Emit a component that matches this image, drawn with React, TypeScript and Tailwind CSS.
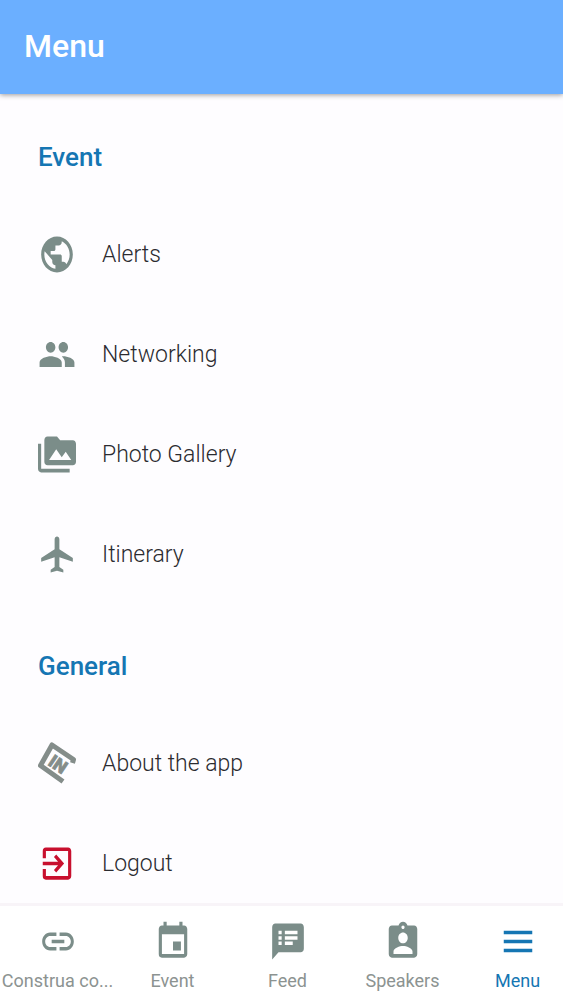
import type { ComponentType, SVGProps } from 'react';
import {
  MdAssignmentInd,
  MdExitToApp,
  MdInsertInvitation,
  MdLink,
  MdLocalAirport,
  MdMenu,
  MdPeople,
  MdPermMedia,
  MdPublic,
  MdSpeakerNotes,
} from 'react-icons/md';

type Icon = ComponentType<SVGProps<SVGSVGElement>>;

interface MenuItem {
  label: string;
  icon: Icon;
  color?: string;
}

// Tilted badge used as the app's own logo
function AppLogo(props: SVGProps<SVGSVGElement>) {
  return (
    <svg viewBox="0 0 38 43" fill="none" {...props}>
      <path
        d="M34.5 21 L35.5 17.5 L14 3 L2.500 23.5 L25 39.5"
        stroke="currentColor"
        strokeWidth="5"
        strokeLinejoin="round"
      />
      <text
        x="9"
        y="22.5"
        transform="rotate(34 9 22.5)"
        fill="currentColor"
        stroke="currentColor"
        strokeWidth="0.7"
        fontFamily="Roboto, sans-serif"
        fontSize="18"
        fontWeight="900"
      >
        IN
      </text>
    </svg>
  );
}

const sections: { title: string; items: MenuItem[] }[] = [
  {
    title: 'Event',
    items: [
      { label: 'Alerts', icon: MdPublic },
      { label: 'Networking', icon: MdPeople },
      { label: 'Photo Gallery', icon: MdPermMedia },
      { label: 'Itinerary', icon: MdLocalAirport },
    ],
  },
  {
    title: 'General',
    items: [
      { label: 'About the app', icon: AppLogo, color: 'text-[#848d8a]' },
      { label: 'Logout', icon: MdExitToApp, color: 'text-[#c8102e]' },
    ],
  },
];

const tabs: MenuItem[] = [
  { label: 'Construa co...', icon: MdLink },
  { label: 'Event', icon: MdInsertInvitation },
  { label: 'Feed', icon: MdSpeakerNotes },
  { label: 'Speakers', icon: MdAssignmentInd },
  { label: 'Menu', icon: MdMenu },
];

function App() {
  return (
    <div className="flex h-screen flex-col bg-[#fefdff] font-['Roboto',sans-serif]">
      {/* Header */}
      <header className="relative flex h-[94px] shrink-0 items-center bg-[#6bafff] px-6 pb-0.5 shadow-[0_1px_5px_rgba(0,0,0,0.4)]">
        <h1 className="text-[32px] leading-9 font-medium text-white">Menu</h1>
      </header>

      {/* Menu sections */}
      <main className="min-h-0 flex-1 overflow-y-auto [scrollbar-width:none]">
        {sections.map((section) => (
          <section key={section.title}>
            <h2 className="flex h-[109px] items-center px-[38px] pt-4 text-[26px] leading-8 font-medium text-[#1576b3]">
              {section.title}
            </h2>
            <ul>
              {section.items.map(({ label, icon: ItemIcon, color }) => (
                <li key={label}>
                  <button type="button" className="flex h-[100px] w-full items-center gap-[26px] px-[38px] pt-0.5 text-left">
                    <ItemIcon
                      preserveAspectRatio="none"
                      className={`h-[43px] w-[38px] shrink-0 ${color ?? 'text-[#7b8d89]'}`}
                    />
                    <span className="pt-0.5 text-[23px] leading-8 font-light text-[#2b2b30]">{label}</span>
                  </button>
                </li>
              ))}
            </ul>
          </section>
        ))}
      </main>

      {/* Bottom tabs */}
      <nav className="flex h-[97px] shrink-0 overflow-x-auto border-t-3 border-[#f8f4f8] bg-white [scrollbar-width:none]">
        {tabs.map(({ label, icon: TabIcon }) => (
          <button
            key={label}
            type="button"
            className={`flex min-w-[115px] flex-1 flex-col items-center gap-1.5 pt-3.5 whitespace-nowrap ${
              label === 'Menu' ? 'text-[#1576b3]' : 'text-[#8c9391]'
            }`}
          >
            <TabIcon
              preserveAspectRatio="none"
              className={`h-[43px] w-[38px] shrink-0 ${label === 'Menu' ? 'text-[#1576b3]' : 'text-[#7b8d89]'}`}
            />
            <span className="text-[18px] leading-6">{label}</span>
          </button>
        ))}
      </nav>
    </div>
  );
}

export default App;
